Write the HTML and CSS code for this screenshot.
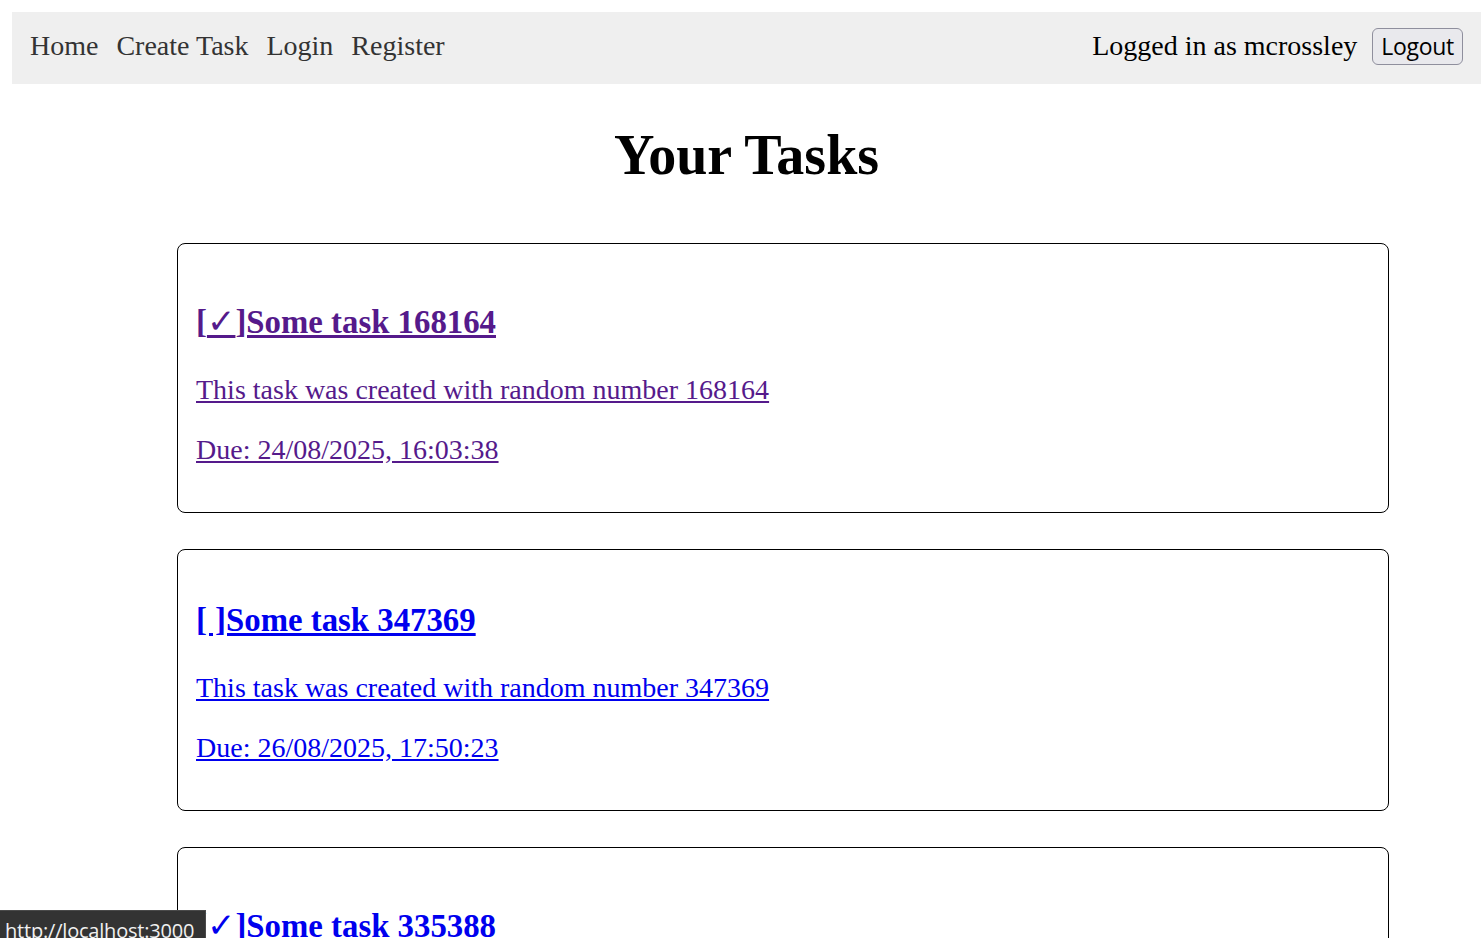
FILE: index.html
```html
<!DOCTYPE html>
<html lang="en">
<head>
<meta charset="utf-8">
<title>Your Tasks</title>
<link rel="stylesheet" href="styles.css">
</head>
<body>
<nav class="topbar">
  <div class="nav-links">
    <a class="nav-link" href="#">Home</a>
    <a class="nav-link" href="#">Create Task</a>
    <a class="nav-link" href="#">Login</a>
    <a class="nav-link" href="#">Register</a>
  </div>
  <div class="nav-user">
    <span class="user-label">Logged in as mcrossley</span>
    <button class="logout-btn" type="button">Logout</button>
  </div>
</nav>

<main class="page">
  <h1 class="page-title">Your Tasks</h1>
  <div class="task-list">
    <a class="task-card visited" href="#">
      <h3 class="task-title done">[<span class="check">✓</span>]Some task 168164</h3>
      <p class="task-text">This task was created with random number 168164</p>
      <p class="task-text">Due: 24/08/2025, 16:03:38</p>
    </a>
    <a class="task-card" href="#">
      <h3 class="task-title">[ ]Some task 347369</h3>
      <p class="task-text">This task was created with random number 347369</p>
      <p class="task-text">Due: 26/08/2025, 17:50:23</p>
    </a>
    <a class="task-card" href="#">
      <h3 class="task-title done">[<span class="check">✓</span>]Some task 335388</h3>
      <p class="task-text">This task was created with random number 335388</p>
      <p class="task-text">Due: 27/08/2025, 09:12:45</p>
    </a>
  </div>
</main>

<div class="status-bar">http://localhost:3000</div>
</body>
</html>
```

FILE: styles.css
```css
html, body {
  overflow: hidden;
}

body {
  margin: 12px 0 0 12px;
  font-family: "Liberation Serif", "Times New Roman", serif;
  font-size: 28px;
  color: #000;
  background: #fff;
}

.topbar {
  display: flex;
  justify-content: space-between;
  align-items: center;
  height: 72px;
  padding: 0 18px 4px;
  background: #efefef;
  box-sizing: border-box;
}

.nav-links {
  display: flex;
  gap: 18px;
}

.nav-link {
  color: #333;
  text-decoration: none;
}

.nav-user {
  display: flex;
  align-items: center;
  gap: 15px;
}

.logout-btn {
  font-family: "Open Sans", "Noto Sans", sans-serif;
  font-size: 23px;
  color: #000;
  background: #e9e9ed;
  border: 1px solid #8f8f9d;
  border-radius: 6px;
  height: 37px;
  padding: 0 8px;
  line-height: 1;
  letter-spacing: -0.3px;
}

.page-title {
  text-align: center;
  font-size: 56px;
  margin: 39px 0 56px;
}

.task-list {
  display: flex;
  flex-direction: column;
  gap: 36px;
  margin: 0 92px 0 165px;
}

.task-card {
  display: block;
  border: 1px solid #000;
  border-radius: 8px;
  padding: 18px;
  color: #0000ee;
}

.task-card.visited {
  color: #551a8b;
}

.task-title {
  font-size: 32.8px;
  margin: 34px 0 33px;
}

.task-title.done {
  margin-top: 39px;
}

.check {
  font-family: "DejaVu Sans", sans-serif;
  font-weight: normal;
  font-size: 34px;
}

.task-text {
  margin: 28px 0;
}

.status-bar {
  position: fixed;
  left: 0;
  bottom: 0;
  width: 206px;
  height: 28px;
  box-sizing: border-box;
  padding: 6px 0 0 5px;
  background: #333;
  border-top: 1px solid #4a4a4a;
  border-right: 1px solid #4a4a4a;
  color: #f0f0f0;
  font-family: "Open Sans", "Noto Sans", sans-serif;
  font-size: 20px;
  letter-spacing: -0.2px;
  line-height: 28px;
  overflow: hidden;
  white-space: nowrap;
}
```
